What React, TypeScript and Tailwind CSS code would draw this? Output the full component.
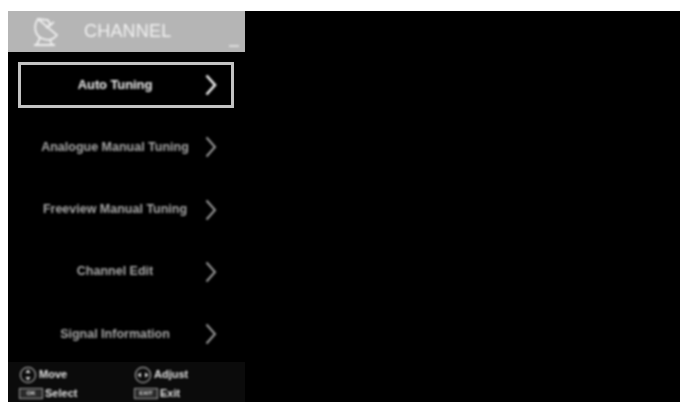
const items = ["Auto Tuning", "Analogue Manual Tuning", "Freeview Manual Tuning", "Channel Edit", "Signal Information"];

function Chevron({ active }: { active: boolean }) {
  return (
    <svg width="14" height="24" viewBox="0 0 14 24" fill="none" className={active ? "text-[#f0f0f0]" : "text-[#9a9a9a]"}>
      <path d="M2.5 2.5 L11 12 L2.5 21.5" stroke="currentColor" strokeWidth={active ? 2.6 : 2} />
    </svg>
  );
}

function Dish() {
  return (
    <svg width="27" height="30" viewBox="0 0 27 30" fill="none" stroke="#f0f0f0" strokeWidth="1.8">
      <path d="M6 2 C1 9 3 18 9 21 C15 24 21 23 25 18 Z" />
      <path d="M6 2 L16 3 L19 9 M14 11 L22 5" />
      <path d="M8 21 L5 27 M2 28 H23 M18 23 L20 28" />
    </svg>
  );
}

function Round({ vertical }: { vertical: boolean }) {
  return (
    <svg width="18" height="18" viewBox="0 0 18 18" fill="none">
      <circle cx="9" cy="9" r="7.6" stroke="#a0a0a0" strokeWidth="1.3" />
      {vertical ? (
        <>
          <path d="M9 3.5 L6.5 7 H11.5 Z" fill="#e8e8e8" />
          <path d="M9 14.5 L6.5 11 H11.5 Z" fill="#e8e8e8" />
        </>
      ) : (
        <>
          <path d="M3.5 9 L7 6.5 V11.5 Z" fill="#e8e8e8" />
          <path d="M14.5 9 L11 6.5 V11.5 Z" fill="#e8e8e8" />
        </>
      )}
    </svg>
  );
}

function Key({ label }: { label: string }) {
  return (
    <span className="flex h-[11px] w-[24px] items-center justify-center border border-[#a0a0a0] bg-[#2a2a2a] text-[6px] leading-none font-bold text-[#e0e0e0]">
      {label}
    </span>
  );
}

export default function App() {
  return (
    <div className="h-[404px] w-[682px] overflow-hidden bg-white pt-[11px] pr-[2px] pb-[2px] pl-[8px] font-['Liberation_Sans',sans-serif]">
      <div className="h-[391px] w-[672px] bg-black">
        <div className="flex h-[391px] w-[237px] flex-col">
          <div className="relative flex h-[41px] items-center bg-[#b5b5b5] pl-[24px]">
            <span className="flex blur-[0.8px]"><Dish /></span>
            <span className="ml-[25px] text-[18px] tracking-[0.2px] text-[#f2f2f2] blur-[0.8px]">CHANNEL</span>
            <span className="absolute right-[6px] bottom-[5px] h-[2px] w-[10px] bg-[#dddddd] blur-[0.8px]" />
          </div>
          <div className="flex h-[310px] flex-col gap-[16.25px] px-[10px] pt-[10px]">
            {items.map((item, i) => (
              <div
                key={item}
                className={`flex h-[46px] w-[216px] shrink-0 items-center border-[3px] pl-[8px] ${
                  i === 0 ? "border-[#c4c4c4]" : "border-transparent"
                }`}
              >
                <span
                  className={`w-[172px] text-center whitespace-nowrap blur-[0.8px] ${
                    i === 0
                      ? "text-[13px] font-bold tracking-[-0.1px] text-[#f0f0f0]"
                      : "text-[12.5px] font-bold tracking-[0px] text-[#a8a8a8]"
                  }`}
                >
                  {item}
                </span>
                <span className="ml-[3px] flex blur-[0.8px]">
                  <Chevron active={i === 0} />
                </span>
              </div>
            ))}
          </div>
          <div className="grid h-[40px] grid-cols-[115px_1fr] bg-[#0b0b0b] pt-[3px] pl-[11px] text-[11px] leading-none font-bold text-[#e4e4e4]">
            <div className="flex h-[19px] items-center gap-[2px] blur-[0.8px]"><Round vertical /><span>Move</span></div>
            <div className="flex h-[19px] items-center gap-[2px] blur-[0.8px]"><Round vertical={false} /><span>Adjust</span></div>
            <div className="flex h-[15px] items-center gap-[2px] blur-[0.8px]"><Key label="OK" /><span>Select</span></div>
            <div className="flex h-[15px] items-center gap-[2px] blur-[0.8px]"><Key label="EXIT" /><span>Exit</span></div>
          </div>
        </div>
      </div>
    </div>
  );
}
